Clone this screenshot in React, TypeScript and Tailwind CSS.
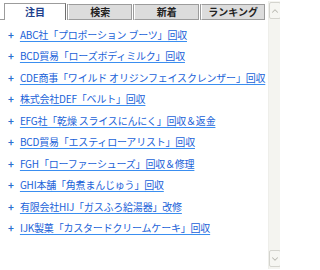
import { ChevronUp, ChevronDown } from "lucide-react";

const tabs = ["注目", "検索", "新着", "ランキング"];

const items = [
  "ABC社「プロポーション ブーツ」回収",
  "BCD貿易「ローズボディミルク」回収",
  "CDE商事「ワイルド オリジンフェイスクレンザー」回収",
  "株式会社DEF「ベルト」回収",
  "EFG社「乾燥 スライスにんにく」回収＆返金",
  "BCD貿易「エスティローアリスト」回収",
  "FGH「ローファーシューズ」回収＆修理",
  "GHI本舗「角煮まんじゅう」回収",
  "有限会社HIJ「ガスふろ給湯器」改修",
  "IJK製菓「カスタードクリームケーキ」回収",
];

export default function App() {
  return (
    <div
      className="w-[280px] h-[270px] flex bg-white overflow-hidden"
      style={{ fontFamily: '"MS UI Gothic", "Noto Sans CJK JP", sans-serif' }}
    >
      {/* MAIN */}
      <div className="flex-1 flex flex-col pr-[3px] pt-[3px]">
        {/* TABS */}
        <div className="flex items-end h-[17px]">
          <div className="w-[4px] h-full border-b border-[#9c9c9c]" />
          <div className="flex-1 flex items-end h-full gap-[2px]">
            {tabs.map((t, i) =>
              i === 0 ? (
                <div
                  key={t}
                  className="w-[62px] h-[17px] border border-b-0 border-[#9c9c9c] border-r-[#6f6f6f] bg-white flex items-center justify-center text-[10px] font-bold text-[#1d3f8c] leading-none"
                >
                  {t}
                </div>
              ) : (
                <div
                  key={t}
                  className="flex-1 h-[16px] border border-[#9c9c9c] border-l-white bg-[#dcdcdc] flex items-center justify-center text-[10px] font-bold text-[#222] leading-none shadow-[-1px_0_0_#9c9c9c]"
                >
                  {t}
                </div>
              )
            )}
          </div>
        </div>

        {/* LIST */}
        <ul className="pt-[4px] pl-[8px] flex flex-col">
          {items.map((item) => (
            <li key={item} className="h-[21.5px] flex items-center gap-[6px]">
              <span className="text-[10px] font-bold text-[#2a6fd0] leading-none">+</span>
              <a
                href="#"
                className="text-[10px] text-[#1a62d8] underline underline-offset-2 decoration-[#3a8ef0] whitespace-nowrap leading-none tracking-[-0.2px]"
              >
                {item}
              </a>
            </li>
          ))}
        </ul>
      </div>

      {/* SCROLLBAR */}
      <div className="w-[17px] mr-[2px] my-[1px] bg-[#f4f4f0] border-l border-[#eeeeea] flex flex-col justify-between">
        <div className="h-[17px] mt-[1px] border border-[#d4d4ce] bg-[#f6f6f2] rounded-[2px] flex items-center justify-center">
          <ChevronUp size={10} strokeWidth={2.5} className="text-[#b8b8b0]" />
        </div>
        <div className="h-[17px] border border-[#d4d4ce] bg-[#f6f6f2] rounded-[2px] flex items-center justify-center mb-[2px]">
          <ChevronDown size={10} strokeWidth={2.5} className="text-[#b8b8b0]" />
        </div>
      </div>
    </div>
  );
}
